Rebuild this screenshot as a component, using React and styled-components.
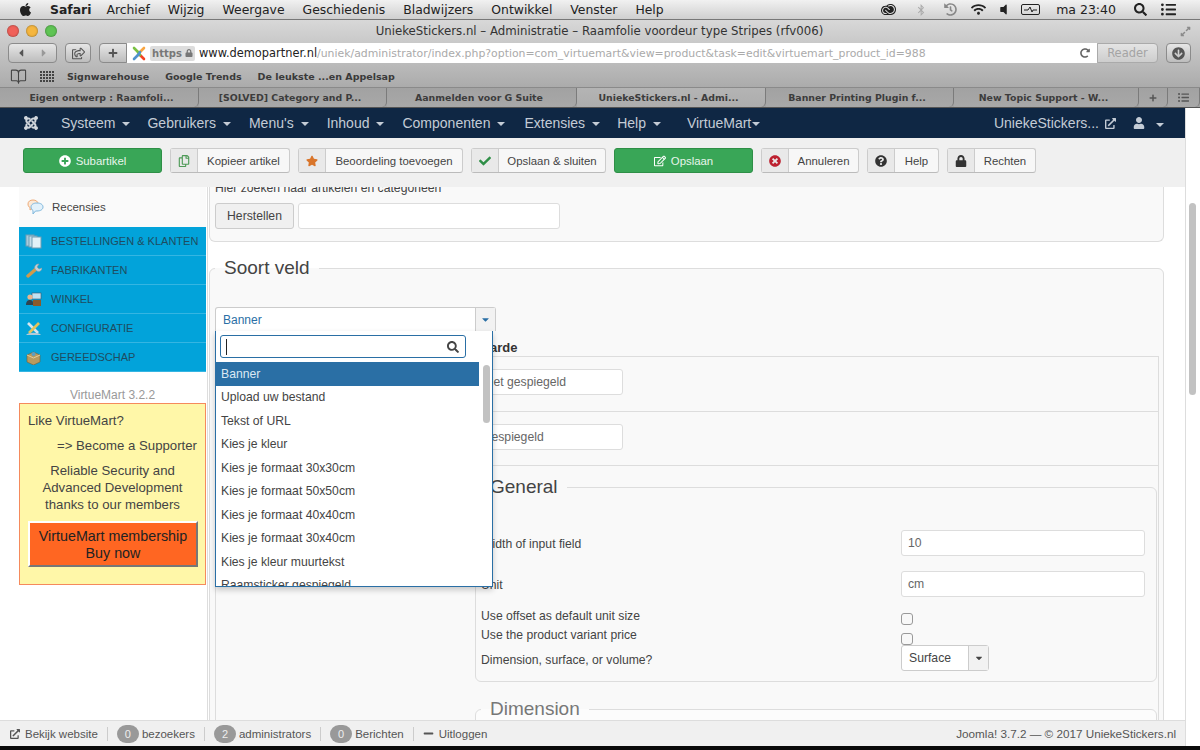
import styled, { createGlobalStyle } from 'styled-components';
import { BookOpen } from 'lucide-react';
import {
  FaApple, FaBluetoothB, FaHistory, FaWifi, FaVolumeOff, FaSearch, FaListUl, FaPlus,
  FaCaretLeft, FaCaretRight, FaLock, FaRedoAlt, FaCaretDown, FaJoomla, FaRegShareSquare,
  FaExternalLinkAlt, FaUser, FaPlusCircle, FaRegCopy, FaStar, FaCheck, FaRegEdit,
  FaTimesCircle, FaQuestionCircle, FaMinus, FaArrowCircleDown, FaExpandAlt,
} from 'react-icons/fa';
import { SiAdobecreativecloud } from 'react-icons/si';

const GlobalStyle = createGlobalStyle`
  html, body {
    margin: 0;
    padding: 0;
    height: 750px;
    overflow: hidden;
    background: #000;
    font-family: "Liberation Sans", Arial, sans-serif;
  }
  * { box-sizing: border-box; }
`;

const Screen = styled.div`
  width: 1200px;
  height: 750px;
  display: flex;
  flex-direction: column;
  background: #000;
`;

/* mac menu bar */
const MenuBar = styled.div`
  height: 20px;
  flex: none;
  display: flex;
  align-items: center;
  padding-left: 18px;
  background: linear-gradient(#f1f1f1, #cfcfcf);
  border-bottom: 1px solid #777;
  font-family: "DejaVu Sans", sans-serif;
  font-size: 12.4px;
  color: #222;
`;

const MenuItem = styled.span`
  margin-right: ${(p) => p.$gap || 18}px;
  font-weight: ${(p) => (p.$bold ? 700 : 400)};
  white-space: nowrap;
`;

const StatusIcons = styled.div`
  margin-left: auto;
  display: flex;
  align-items: center;
  height: 100%;
  padding-right: 24px;
  color: #222;
`;

const StatusSlot = styled.span`
  display: flex;
  align-items: center;
  margin-left: ${(p) => p.$left}px;
  color: ${(p) => p.$color || '#222'};
  font-size: ${(p) => p.$size || 14}px;
`;

const Battery = styled.span`
  width: 19px;
  height: 11px;
  border: 1px solid #222;
  border-radius: 2px;
  display: flex;
  align-items: center;
  justify-content: center;
`;

/* safari chrome */
const Chrome = styled.div`
  flex: none;
  background: linear-gradient(#d8d8d8, #a6a6a6 85%);
  font-family: "DejaVu Sans", sans-serif;
`;

const TitleRow = styled.div`
  height: 22px;
  display: grid;
  grid-template-columns: 1fr auto 1fr;
  align-items: center;
  padding: 0 8px 0 7px;
  font-size: 11.75px;
  color: #333;
`;

const Lights = styled.div`
  display: flex;
  gap: 7px;
`;

const Light = styled.span`
  width: 12px;
  height: 12px;
  border-radius: 50%;
  background: ${(p) => p.$color};
  box-shadow: inset 0 0 2px rgba(0, 0, 0, 0.5);
`;

const FullScreen = styled.span`
  justify-self: end;
  color: #8a8a8a;
  font-size: 11px;
  display: flex;
  padding-right: 1px;
`;

const ToolRow = styled.div`
  height: 23px;
  display: flex;
  align-items: flex-start;
  padding: 1px 9px 0 8px;
`;

const ChromeButton = styled.div`
  width: ${(p) => p.$w}px;
  height: 20px;
  margin-right: ${(p) => p.$gap || 0}px;
  flex: none;
  display: flex;
  align-items: center;
  justify-content: ${(p) => (p.$split ? 'space-around' : 'center')};
  border: 1px solid #8b8b8b;
  border-radius: ${(p) => (p.$joined ? '4px 0 0 4px' : '4px')};
  background: linear-gradient(#e6e6e6, #bdbdbd);
  color: #555;
  font-size: 12px;
`;

const AddressBar = styled.div`
  width: 970px;
  height: 20px;
  flex: none;
  display: flex;
  align-items: center;
  background: #fff;
  font-size: 10.88px;
  color: #aaa;
  padding-left: 5px;
  white-space: nowrap;
`;

const HttpsBadge = styled.span`
  width: 45px;
  height: 15px;
  margin: 0 4px 0 4px;
  display: flex;
  align-items: center;
  justify-content: center;
  gap: 3px;
  background: #ddd;
  border-radius: 2px;
  color: #777;
  font-size: 10px;
  font-weight: 700;
`;

const Host = styled.span`
  color: #222;
  font-size: 11.4px;
`;

const Reload = styled.span`
  margin-left: auto;
  margin-right: 7px;
  display: flex;
  color: #666;
  font-size: 10px;
`;

const ReaderButton = styled.div`
  width: 61px;
  height: 20px;
  flex: none;
  display: flex;
  align-items: center;
  justify-content: center;
  background: linear-gradient(#e4e4e4, #cdcdcd);
  border: 1px solid #aaa;
  border-radius: 0 4px 4px 0;
  color: #a4a4a4;
  font-size: 11.5px;
  margin-right: 8px;
`;

const BookmarkRow = styled.div`
  height: 22px;
  display: flex;
  align-items: center;
  padding-left: 10px;
  font-size: 9.5px;
  font-weight: 700;
  color: #3a3a3a;
`;

const BookmarkIcon = styled.span`
  width: ${(p) => p.$w}px;
  display: flex;
  color: #444;
`;

const Bookmark = styled.span`
  margin-right: 16px;
  white-space: nowrap;
`;

const TabRow = styled.div`
  height: 21px;
  display: flex;
  border-top: 1px solid #8a8a8a;
  border-bottom: 1px solid #555;
  background: #a1a1a1;
`;

const Tab = styled.div`
  width: ${(p) => p.$w}px;
  flex: none;
  display: flex;
  align-items: center;
  justify-content: center;
  padding: 0 5px 0 ${(p) => p.$inset || 0}px;
  border-right: 1px solid #7b7b7b;
  border-radius: 0 0 5px 0;
  background: ${(p) => (p.$active ? 'linear-gradient(#b4b4b4, #adadad)' : 'linear-gradient(#a2a2a2, #a8a8a8)')};
  color: #3c3c3c;
  font-size: 9.4px;
  font-weight: 700;
  white-space: nowrap;
  overflow: hidden;
`;

/* joomla page */
const Page = styled.div`
  flex: none;
  height: 638px;
  display: flex;
  background: #fff;
`;

const Admin = styled.div`
  width: 1185px;
  flex: none;
  display: flex;
  flex-direction: column;
  min-height: 0;
`;

const ScrollGutter = styled.div`
  flex: 1;
  background: #fff;
  border-left: 1px solid #ddd;
  padding: 95px 3px 0 3px;
`;

const ScrollThumb = styled.div`
  width: 7px;
  height: 192px;
  border-radius: 4px;
  background: #c2c2c2;
`;

const Navbar = styled.nav`
  height: 30px;
  flex: none;
  display: flex;
  align-items: center;
  background: #0f2744;
  color: #c4ccd6;
  font-size: 14px;
  padding-left: 23px;
`;

const NavLogo = styled.span`
  display: flex;
  width: 38px;
  font-size: 16px;
  color: #d3d8de;
`;

const NavItem = styled.span`
  display: flex;
  align-items: center;
  margin-right: ${(p) => p.$gap}px;
  gap: ${(p) => (p.$tight ? 1 : 7)}px;
  white-space: nowrap;
`;

const Caret = styled.span`
  width: 0;
  height: 0;
  border-left: 4px solid transparent;
  border-right: 4px solid transparent;
  border-top: 4px solid currentColor;
  margin-top: 2px;
`;

const NavRight = styled.div`
  margin-left: auto;
  display: flex;
  align-items: center;
  padding-right: 21px;
`;

const NavIcon = styled.span`
  display: flex;
  font-size: ${(p) => p.$size || 11}px;
  margin: ${(p) => p.$margin};
`;

const Toolbar = styled.div`
  height: 49px;
  flex: none;
  display: flex;
  align-items: flex-start;
  gap: 8px;
  padding: 10px 0 0 23px;
  background: #f0f0f0;
`;

const ActionGreen = styled.div`
  width: ${(p) => p.$w}px;
  height: 25px;
  display: flex;
  align-items: center;
  justify-content: center;
  gap: 5px;
  border-radius: 3px;
  border: 1px solid #2f8f47;
  background: #39a657;
  color: #e8f5eb;
  font-size: 11.4px;
`;

const ActionButton = styled.div`
  width: ${(p) => p.$w}px;
  height: 25px;
  display: flex;
  border: 1px solid #ccc;
  border-bottom-color: #bbb;
  border-radius: 3px;
  background: #f7f7f7;
  color: #444;
  font-size: 11.4px;
`;

const ActionIcon = styled.span`
  width: 27px;
  flex: none;
  display: flex;
  align-items: center;
  justify-content: center;
  background: #e9e9e9;
  border-right: 1px solid #ccc;
  color: ${(p) => p.$color};
  font-size: 12px;
`;

const ActionLabel = styled.span`
  flex: 1;
  display: flex;
  align-items: center;
  justify-content: center;
  white-space: nowrap;
`;

const Body = styled.div`
  flex: 1;
  min-height: 0;
  display: flex;
  overflow: hidden;
  background: #fff;
`;

const Sidebar = styled.aside`
  width: 189px;
  margin-left: 19px;
  flex: none;
  border-right: 1px solid #ddd;
`;

const MenuReview = styled.div`
  height: 40px;
  display: flex;
  align-items: center;
  gap: 8px;
  padding-left: 7px;
  background: #fafafa;
  color: #444;
  font-size: 11.5px;
  margin-right: 1px;
`;

const BlueMenu = styled.div`
  margin-right: 1px;
`;

const BlueItem = styled.div`
  height: 29px;
  display: flex;
  align-items: center;
  gap: 9px;
  padding-left: 6px;
  background: #02a3da;
  border-bottom: 1px solid #35b5e2;
  color: #1f4c60;
  font-size: 11px;
  white-space: nowrap;
`;

const Version = styled.div`
  margin: 15px 1px 0 0;
  height: 16px;
  line-height: 16px;
  text-align: center;
  color: #999;
  font-size: 12px;
`;

const Promo = styled.div`
  width: 187px;
  height: 182px;
  padding: 8px 8px 0;
  background: #fff7a8;
  border: 1px solid #f58a5c;
  color: #444;
  font-size: 13.2px;
`;

const PromoLine = styled.div`
  line-height: 17px;
  text-align: ${(p) => p.$align || 'left'};
  margin-bottom: ${(p) => p.$after || 0}px;
`;

const BuyButton = styled.div`
  width: 170px;
  height: 46px;
  margin-top: 8px;
  padding-top: 1px;
  display: flex;
  align-items: center;
  justify-content: center;
  text-align: center;
  line-height: 17px;
  background: #ff6622;
  border: 2px solid;
  border-color: #fff #777 #777 #fff;
  color: #222;
  font-size: 14.3px;
`;

const Content = styled.main`
  width: 955px;
  margin-left: 1px;
  flex: none;
  font-size: 12.2px;
  color: #444;
`;

const TopPanel = styled.div`
  height: 62px;
  margin-top: -7px;
  padding: 0 5px;
  background: #f9f9f9;
  border: 1px solid #ddd;
  border-top: 0;
  border-radius: 0 0 6px 6px;
`;

const SearchHint = styled.div`
  height: 16px;
  line-height: 16px;
  color: #444;
`;

const SearchRow = styled.div`
  display: flex;
  gap: 4px;
  margin-top: 7px;
`;

const ResetButton = styled.div`
  width: 79px;
  height: 26px;
  display: flex;
  align-items: center;
  justify-content: center;
  background: #f0f0f0;
  border: 1px solid #ccc;
  border-radius: 3px;
  color: #444;
`;

const TextField = styled.div`
  width: ${(p) => p.$w}px;
  height: ${(p) => p.$h || 26}px;
  display: flex;
  align-items: center;
  padding-left: ${(p) => p.$pad || 8}px;
  background: #fff;
  border: 1px solid #ddd;
  border-radius: 3px;
  color: #666;
  white-space: nowrap;
`;

const Fieldset = styled.fieldset`
  margin: ${(p) => p.$margin};
  padding: ${(p) => p.$padding};
  min-width: 0;
  background: ${(p) => p.$bg || '#f9f9f9'};
  border: 1px solid #ddd;
  border-radius: 6px;
`;

const Legend = styled.legend`
  padding: 0 9px;
  height: 24px;
  line-height: 24px;
  font-size: 19px;
  color: ${(p) => p.$color || '#444'};
`;

const SelectBox = styled.div`
  width: 281px;
  height: 24px;
  display: flex;
  background: #fff;
  border: 1px solid #ccc;
  border-bottom: 0;
  border-radius: 3px 3px 0 0;
  color: #2a6fa5;
  font-size: 12px;
`;

const SelectValue = styled.span`
  flex: 1;
  display: flex;
  align-items: center;
  padding-left: 7px;
`;

const SelectArrow = styled.span`
  width: 20px;
  flex: none;
  display: flex;
  align-items: center;
  justify-content: center;
  background: #f2f2f2;
  border-left: 1px solid #ccc;
  color: ${(p) => p.$color};
`;

const TableHead = styled.div`
  height: 25px;
  padding: 9px 0 0 256px;
  line-height: 16px;
  font-size: 13px;
  font-weight: 700;
  color: #333;
`;

const ValueTable = styled.div`
  margin-right: 4px;
  border: 1px solid #ddd;
  border-bottom: 0;
`;

const TableRow = styled.div`
  height: ${(p) => p.$h}px;
  padding: 12px 0 0 257px;
  border-bottom: 1px solid #ddd;
`;

const FormRow = styled.div`
  display: grid;
  grid-template-columns: 420px 244px;
  align-items: center;
  height: ${(p) => p.$h}px;
  margin-bottom: ${(p) => p.$after || 0}px;
`;

const FormLabel = styled.span`
  padding-top: ${(p) => p.$down || 0}px;
`;

const CheckBox = styled.span`
  width: 12px;
  height: 12px;
  margin-top: 7px;
  background: #f8f8f8;
  border: 1px solid #999;
  border-radius: 3px;
`;

const SmallSelect = styled.div`
  width: 88px;
  height: 26px;
  display: flex;
  background: #fff;
  border: 1px solid #ccc;
  border-radius: 3px;
  color: #444;
`;

/* select2 dropdown, lies over the table */
const FieldWrap = styled.div`
  position: relative;
`;

const Dropdown = styled.div`
  position: absolute;
  left: 0;
  top: 24px;
  width: 278px;
  height: 256px;
  z-index: 5;
  background: #fff;
  border: 1px solid #2a6fa5;
  border-top: 0;
  box-shadow: 0 3px 6px rgba(0, 0, 0, 0.2);
  overflow: hidden;
`;

const DropSearch = styled.div`
  width: 246px;
  height: 23px;
  margin: 4px 0 4px 4px;
  display: flex;
  align-items: center;
  justify-content: space-between;
  padding: 0 6px 0 5px;
  border: 1px solid #2a6fa5;
  border-radius: 3px;
  color: #444;
  font-size: 13px;
`;

const TextCursor = styled.span`
  width: 1px;
  height: 16px;
  background: #222;
`;

const DropBody = styled.div`
  display: flex;
`;

const OptionList = styled.div`
  width: 263px;
  flex: none;
`;

const Option = styled.div`
  height: 23.5px;
  display: flex;
  align-items: center;
  padding-left: 5px;
  font-size: 12.2px;
  color: ${(p) => (p.$active ? '#dbe8f3' : '#444')};
  background: ${(p) => (p.$active ? '#2a6fa5' : 'transparent')};
`;

const DropScroll = styled.div`
  width: 7px;
  height: 58px;
  margin: 3px 0 0 4px;
  border-radius: 4px;
  background: #c2c2c2;
`;

const StatusBar = styled.footer`
  height: 26px;
  flex: none;
  display: flex;
  align-items: center;
  padding: 0 9px 0 10px;
  background: #f0f0f0;
  border-top: 1px solid #ddd;
  font-size: 11.5px;
  color: #555;
  position: relative;
  z-index: 2;
`;

const StatusItem = styled.span`
  display: flex;
  align-items: center;
  gap: ${(p) => p.$gap || 3}px;
  white-space: nowrap;
`;

const Divider = styled.span`
  width: 1px;
  height: 14px;
  margin: 0 9px;
  background: #ccc;
`;

const Count = styled.span`
  width: 22px;
  height: 18px;
  display: flex;
  align-items: center;
  justify-content: center;
  border-radius: 9px;
  background: #999;
  color: #eee;
  font-size: 11px;
`;

const StatusRight = styled.span`
  margin-left: auto;
  font-size: 11.7px;
  white-space: nowrap;
`;

const BottomEdge = styled.div`
  height: 4px;
  flex: none;
  background: #0a0a0a;
`;

const OPTIONS = [
  'Banner', 'Upload uw bestand', 'Tekst of URL', 'Kies je kleur', 'Kies je formaat 30x30cm',
  'Kies je formaat 50x50cm', 'Kies je formaat 40x40cm', 'Kies je formaat 30x40cm',
  'Kies je kleur muurtekst', 'Raamsticker gespiegeld',
];

const NAV = [
  ['Systeem', 17], ['Gebruikers', 18], ["Menu's", 18], ['Inhoud', 18],
  ['Componenten', 19], ['Extensies', 17], ['Help', 26],
];

const TABS = [
  ['Eigen ontwerp : Raamfoli...', 199, false, 10], ['[SOLVED] Category and P...', 188],
  ['Aanmelden voor G Suite', 190], ['UniekeStickers.nl - Admi...', 189, true],
  ['Banner Printing Plugin f...', 188], ['New Topic Support - W...', 185],
];

function FaviconJoomla() {
  return (
    <svg width="14" height="15" viewBox="0 0 14 15" fill="none" strokeWidth="2.6" strokeLinecap="round">
      <path d="M2 2l4 4" stroke="#7ac143" />
      <path d="M12 2L8 6" stroke="#f9a541" />
      <path d="M12 13L8 9" stroke="#f44321" />
      <path d="M2 13l4-4" stroke="#5091cd" />
      <path d="M6 6l2 3" stroke="#7ac143" />
      <path d="M8 6L6 9" stroke="#5091cd" />
    </svg>
  );
}

function AppGrid() {
  return (
    <svg width="14" height="11" viewBox="0 0 14 11" fill="#444">
      {[0, 3, 6, 9].map((y) => [0, 3, 6, 9, 12].map((x) => <rect key={`${x}-${y}`} x={x} y={y} width="2" height="2" />))}
    </svg>
  );
}

function BubbleIcon() {
  return (
    <svg width="18" height="16" viewBox="0 0 18 16">
      <path d="M2 5c0-2.5 2-4 5-4s5 1.500 5 4-2 4-5 4L4 11V8.500C2.800 8 2 6.800 2 5z" fill="#fbe9d8" stroke="#eeaa77" />
      <path d="M5 8c0-2.500 2.500-4 6-4s6 1.500 6 4-2.500 4-6 4H9.500L7 15v-3.500C5.800 10.800 5 9.500 5 8z" fill="#e2f1fb" stroke="#7fb7dc" />
    </svg>
  );
}

function CopyIcon() {
  return (
    <svg width="17" height="15" viewBox="0 0 17 15">
      <rect x="1" y="1" width="8" height="11" fill="#a9cbdc" stroke="#6f9db3" />
      <rect x="4" y="2" width="8" height="11" fill="#c3dde9" stroke="#6f9db3" />
      <rect x="7" y="3" width="9" height="11" fill="#e2f1f7" stroke="#6f9db3" />
    </svg>
  );
}

function WrenchIcon() {
  return (
    <svg width="17" height="15" viewBox="0 0 17 15" fill="none">
      <path d="M3 13l8-7" stroke="#cf9a4b" strokeWidth="3.400" strokeLinecap="round" />
      <path d="M10 6c-1-3 1-5 4-5l-2 3 2 2 3-1c0 3-3 4-5 3z" fill="#c6d0d6" stroke="#8f9ca4" strokeWidth=".6" />
    </svg>
  );
}

function ShopIcon() {
  return (
    <svg width="17" height="15" viewBox="0 0 17 15">
      <rect x="7" y="1" width="9" height="6" fill="#bfe2f2" stroke="#456" strokeWidth=".6" />
      <circle cx="5" cy="5" r="2.600" fill="#e8b58c" />
      <path d="M1 13c0-4 2-5 4-5s3 1 3 3v2z" fill="#2f4350" />
      <rect x="8" y="8" width="8" height="6" fill="#8a5a2b" />
    </svg>
  );
}

function ToolsIcon() {
  return (
    <svg width="17" height="15" viewBox="0 0 17 15" fill="none">
      <path d="M3 2l10 10" stroke="#d8e6ee" strokeWidth="2.600" />
      <path d="M14 2L4 12" stroke="#e5c35a" strokeWidth="2.600" />
      <path d="M1 14c2-3 13-3 15 0z" fill="#b4cad6" />
    </svg>
  );
}

function BoxIcon() {
  return (
    <svg width="17" height="15" viewBox="0 0 17 15">
      <path d="M2 5l6.500-3L15 5v7l-6.500 3L2 12z" fill="#b89a5e" stroke="#776033" strokeWidth=".6" />
      <path d="M2 5l6.500 3L15 5" fill="none" stroke="#e2cd9b" />
      <circle cx="8.500" cy="4" r="2" fill="#5a9fc4" />
    </svg>
  );
}

const SIDE_ITEMS = [
  ['BESTELLINGEN & KLANTEN', CopyIcon],
  ['FABRIKANTEN', WrenchIcon],
  ['WINKEL', ShopIcon],
  ['CONFIGURATIE', ToolsIcon],
  ['GEREEDSCHAP', BoxIcon],
];

export default function App() {
  return (
    <Screen>
      <GlobalStyle />
      <MenuBar>
        <MenuItem $gap={17}><FaApple size={15} style={{ display: 'block' }} /></MenuItem>
        <MenuItem $bold $gap={15}>Safari</MenuItem>
        <MenuItem>Archief</MenuItem>
        <MenuItem>Wijzig</MenuItem>
        <MenuItem>Weergave</MenuItem>
        <MenuItem>Geschiedenis</MenuItem>
        <MenuItem>Bladwijzers</MenuItem>
        <MenuItem>Ontwikkel</MenuItem>
        <MenuItem>Venster</MenuItem>
        <MenuItem>Help</MenuItem>
        <StatusIcons>
          <StatusSlot $size={15}><SiAdobecreativecloud /></StatusSlot>
          <StatusSlot $left={19} $color="#aaa" $size={12}><FaBluetoothB /></StatusSlot>
          <StatusSlot $left={17} $color="#888" $size={13}><FaHistory /></StatusSlot>
          <StatusSlot $left={14} $size={15}><FaWifi /></StatusSlot>
          <StatusSlot $left={11} $size={13}><FaVolumeOff /></StatusSlot>
          <StatusSlot $left={11}>
            <Battery>
              <svg width="13" height="7" viewBox="0 0 13 7" fill="none" stroke="#222"><path d="M0 4h4l2-3 2 5 1-2h4" /></svg>
            </Battery>
          </StatusSlot>
          <StatusSlot $left={16} $size={12.500}>ma 23:40</StatusSlot>
          <StatusSlot $left={18} $size={13}><FaSearch /></StatusSlot>
          <StatusSlot $left={14} $size={15}><FaListUl /></StatusSlot>
        </StatusIcons>
      </MenuBar>

      <Chrome>
        <TitleRow>
          <Lights>
            <Light $color="#f0615a" />
            <Light $color="#f5b63f" />
            <Light $color="#5fc454" />
          </Lights>
          <span>UniekeStickers.nl – Administratie – Raamfolie voordeur type Stripes (rfv006)</span>
          <FullScreen><FaExpandAlt /></FullScreen>
        </TitleRow>
        <ToolRow>
          <ChromeButton $w={49} $gap={8} $split>
            <FaCaretLeft />
            <FaCaretRight color="#999" />
          </ChromeButton>
          <ChromeButton $w={26} $gap={8}><FaRegShareSquare size={13} /></ChromeButton>
          <ChromeButton $w={28} $joined><FaPlus size={10} /></ChromeButton>
          <AddressBar>
            <FaviconJoomla />
            <HttpsBadge>https <FaLock size={8} /></HttpsBadge>
            <Host>www.demopartner.nl</Host>/uniek/administrator/index.php?option=com_virtuemart&amp;view=product&amp;task=edit&amp;virtuemart_product_id=988
            <Reload><FaRedoAlt /></Reload>
          </AddressBar>
          <ReaderButton>Reader</ReaderButton>
          <ChromeButton $w={25}><FaArrowCircleDown size={13} /></ChromeButton>
        </ToolRow>
        <BookmarkRow>
          <BookmarkIcon $w={30}><BookOpen size={17} strokeWidth={1.5} /></BookmarkIcon>
          <BookmarkIcon $w={27}><AppGrid /></BookmarkIcon>
          <Bookmark>Signwarehouse</Bookmark>
          <Bookmark>Google Trends</Bookmark>
          <Bookmark>De leukste ...en Appelsap</Bookmark>
        </BookmarkRow>
        <TabRow>
          {TABS.map(([label, w, active, inset]) => <Tab key={label} $w={w} $active={active} $inset={inset}>{label}</Tab>)}
          <Tab $w={29} $inset={5}><FaPlus size={8} color="#555" /></Tab>
          <Tab $w={32} $inset={5}><FaListUl size={11} color="#555" /></Tab>
        </TabRow>
      </Chrome>

      <Page>
        <Admin>
          <Navbar>
            <NavLogo><FaJoomla /></NavLogo>
            {NAV.map(([label, gap]) => (
              <NavItem key={label} $gap={gap}>{label} <Caret /></NavItem>
            ))}
            <NavItem $gap={0} $tight>VirtueMart<Caret /></NavItem>
            <NavRight>
              <span>UniekeStickers...</span>
              <NavIcon $margin="0 0 0 6px"><FaExternalLinkAlt /></NavIcon>
              <NavIcon $margin="0 0 0 17px" $size={12}><FaUser /></NavIcon>
              <NavIcon $margin="2px 0 0 11px"><Caret /></NavIcon>
            </NavRight>
          </Navbar>

          <Toolbar>
            <ActionGreen $w={139}><FaPlusCircle size={12} color="#fff" /> Subartikel</ActionGreen>
            <ActionButton $w={120}>
              <ActionIcon $color="#4e9a57"><FaRegCopy /></ActionIcon>
              <ActionLabel>Kopieer artikel</ActionLabel>
            </ActionButton>
            <ActionButton $w={165}>
              <ActionIcon $color="#d9752a"><FaStar /></ActionIcon>
              <ActionLabel>Beoordeling toevoegen</ActionLabel>
            </ActionButton>
            <ActionButton $w={135}>
              <ActionIcon $color="#2f8f47"><FaCheck /></ActionIcon>
              <ActionLabel>Opslaan &amp; sluiten</ActionLabel>
            </ActionButton>
            <ActionGreen $w={139}><FaRegEdit size={12} color="#fff" /> Opslaan</ActionGreen>
            <ActionButton $w={98}>
              <ActionIcon $color="#bd2130"><FaTimesCircle /></ActionIcon>
              <ActionLabel>Annuleren</ActionLabel>
            </ActionButton>
            <ActionButton $w={72}>
              <ActionIcon $color="#333"><FaQuestionCircle /></ActionIcon>
              <ActionLabel>Help</ActionLabel>
            </ActionButton>
            <ActionButton $w={89}>
              <ActionIcon $color="#333"><FaLock /></ActionIcon>
              <ActionLabel>Rechten</ActionLabel>
            </ActionButton>
          </Toolbar>

          <Body>
            <Sidebar>
              <MenuReview><BubbleIcon /> Recensies</MenuReview>
              <BlueMenu>
                {SIDE_ITEMS.map(([label, Icon]) => (
                  <BlueItem key={label}><Icon /> {label}</BlueItem>
                ))}
              </BlueMenu>
              <Version>VirtueMart 3.2.2</Version>
              <Promo>
                <PromoLine $after={8}>Like VirtueMart?</PromoLine>
                <PromoLine $align="right" $after={8}>=&gt; Become a Supporter</PromoLine>
                <PromoLine $align="center">Reliable Security and</PromoLine>
                <PromoLine $align="center">Advanced Development</PromoLine>
                <PromoLine $align="center">thanks to our members</PromoLine>
                <BuyButton>VirtueMart membership<br />Buy now</BuyButton>
              </Promo>
            </Sidebar>

            <Content>
              <TopPanel>
                <SearchHint>Hier zoeken naar artikelen en categorieën</SearchHint>
                <SearchRow>
                  <ResetButton>Herstellen</ResetButton>
                  <TextField $w={262} />
                </SearchRow>
              </TopPanel>

              <Fieldset $margin="14px 0 0" $padding="27px 0 0 5px">
                <Legend>Soort veld</Legend>
                <FieldWrap>
                  <SelectBox>
                    <SelectValue>Banner</SelectValue>
                    <SelectArrow $color="#2a6fa5"><FaCaretDown size={11} /></SelectArrow>
                  </SelectBox>
                  <Dropdown>
                    <DropSearch>
                      <TextCursor />
                      <FaSearch size={12} />
                    </DropSearch>
                    <DropBody>
                      <OptionList>
                        {OPTIONS.map((opt, i) => <Option key={opt} $active={i === 0}>{opt}</Option>)}
                      </OptionList>
                      <DropScroll />
                    </DropBody>
                  </Dropdown>
                </FieldWrap>
                <TableHead>Waarde</TableHead>
                <ValueTable>
                  <TableRow $h={55}><TextField $w={150} $h={26}>Niet gespiegeld</TextField></TableRow>
                  <TableRow $h={54}><TextField $w={150} $h={26}>Gespiegeld</TextField></TableRow>
                  <Fieldset $margin="9px 1px 0 259px" $padding="31px 0 10px 5px">
                    <Legend>General</Legend>
                    <FormRow $h={26} $after={15}>
                      <FormLabel $down={2}>Width of input field</FormLabel>
                      <TextField $w={244} $pad={6}>10</TextField>
                    </FormRow>
                    <FormRow $h={26} $after={9}>
                      <FormLabel $down={2}>Unit</FormLabel>
                      <TextField $w={244} $pad={6}>cm</TextField>
                    </FormRow>
                    <FormRow $h={19}>
                      <FormLabel>Use offset as default unit size</FormLabel>
                      <CheckBox />
                    </FormRow>
                    <FormRow $h={20}>
                      <FormLabel>Use the product variant price</FormLabel>
                      <CheckBox />
                    </FormRow>
                    <FormRow $h={26}>
                      <FormLabel $down={4}>Dimension, surface, or volume?</FormLabel>
                      <SmallSelect>
                        <SelectValue>Surface</SelectValue>
                        <SelectArrow $color="#444"><FaCaretDown size={10} /></SelectArrow>
                      </SmallSelect>
                    </FormRow>
                  </Fieldset>
                  <Fieldset $margin="15px 1px 0 259px" $padding="30px 0 40px 5px" $bg="#fcfcfc">
                    <Legend $color="#777">Dimension</Legend>
                  </Fieldset>
                </ValueTable>
              </Fieldset>
            </Content>
          </Body>

          <StatusBar>
            <StatusItem $gap={5}><FaExternalLinkAlt size={10} /> Bekijk website</StatusItem>
            <Divider />
            <StatusItem><Count>0</Count> bezoekers</StatusItem>
            <Divider />
            <StatusItem><Count>2</Count> administrators</StatusItem>
            <Divider />
            <StatusItem><Count>0</Count> Berichten</StatusItem>
            <Divider />
            <StatusItem $gap={5}><FaMinus size={11} /> Uitloggen</StatusItem>
            <StatusRight>Joomla! 3.7.2 — © 2017 UniekeStickers.nl</StatusRight>
          </StatusBar>
        </Admin>
        <ScrollGutter>
          <ScrollThumb />
        </ScrollGutter>
      </Page>
      <BottomEdge />
    </Screen>
  );
}
